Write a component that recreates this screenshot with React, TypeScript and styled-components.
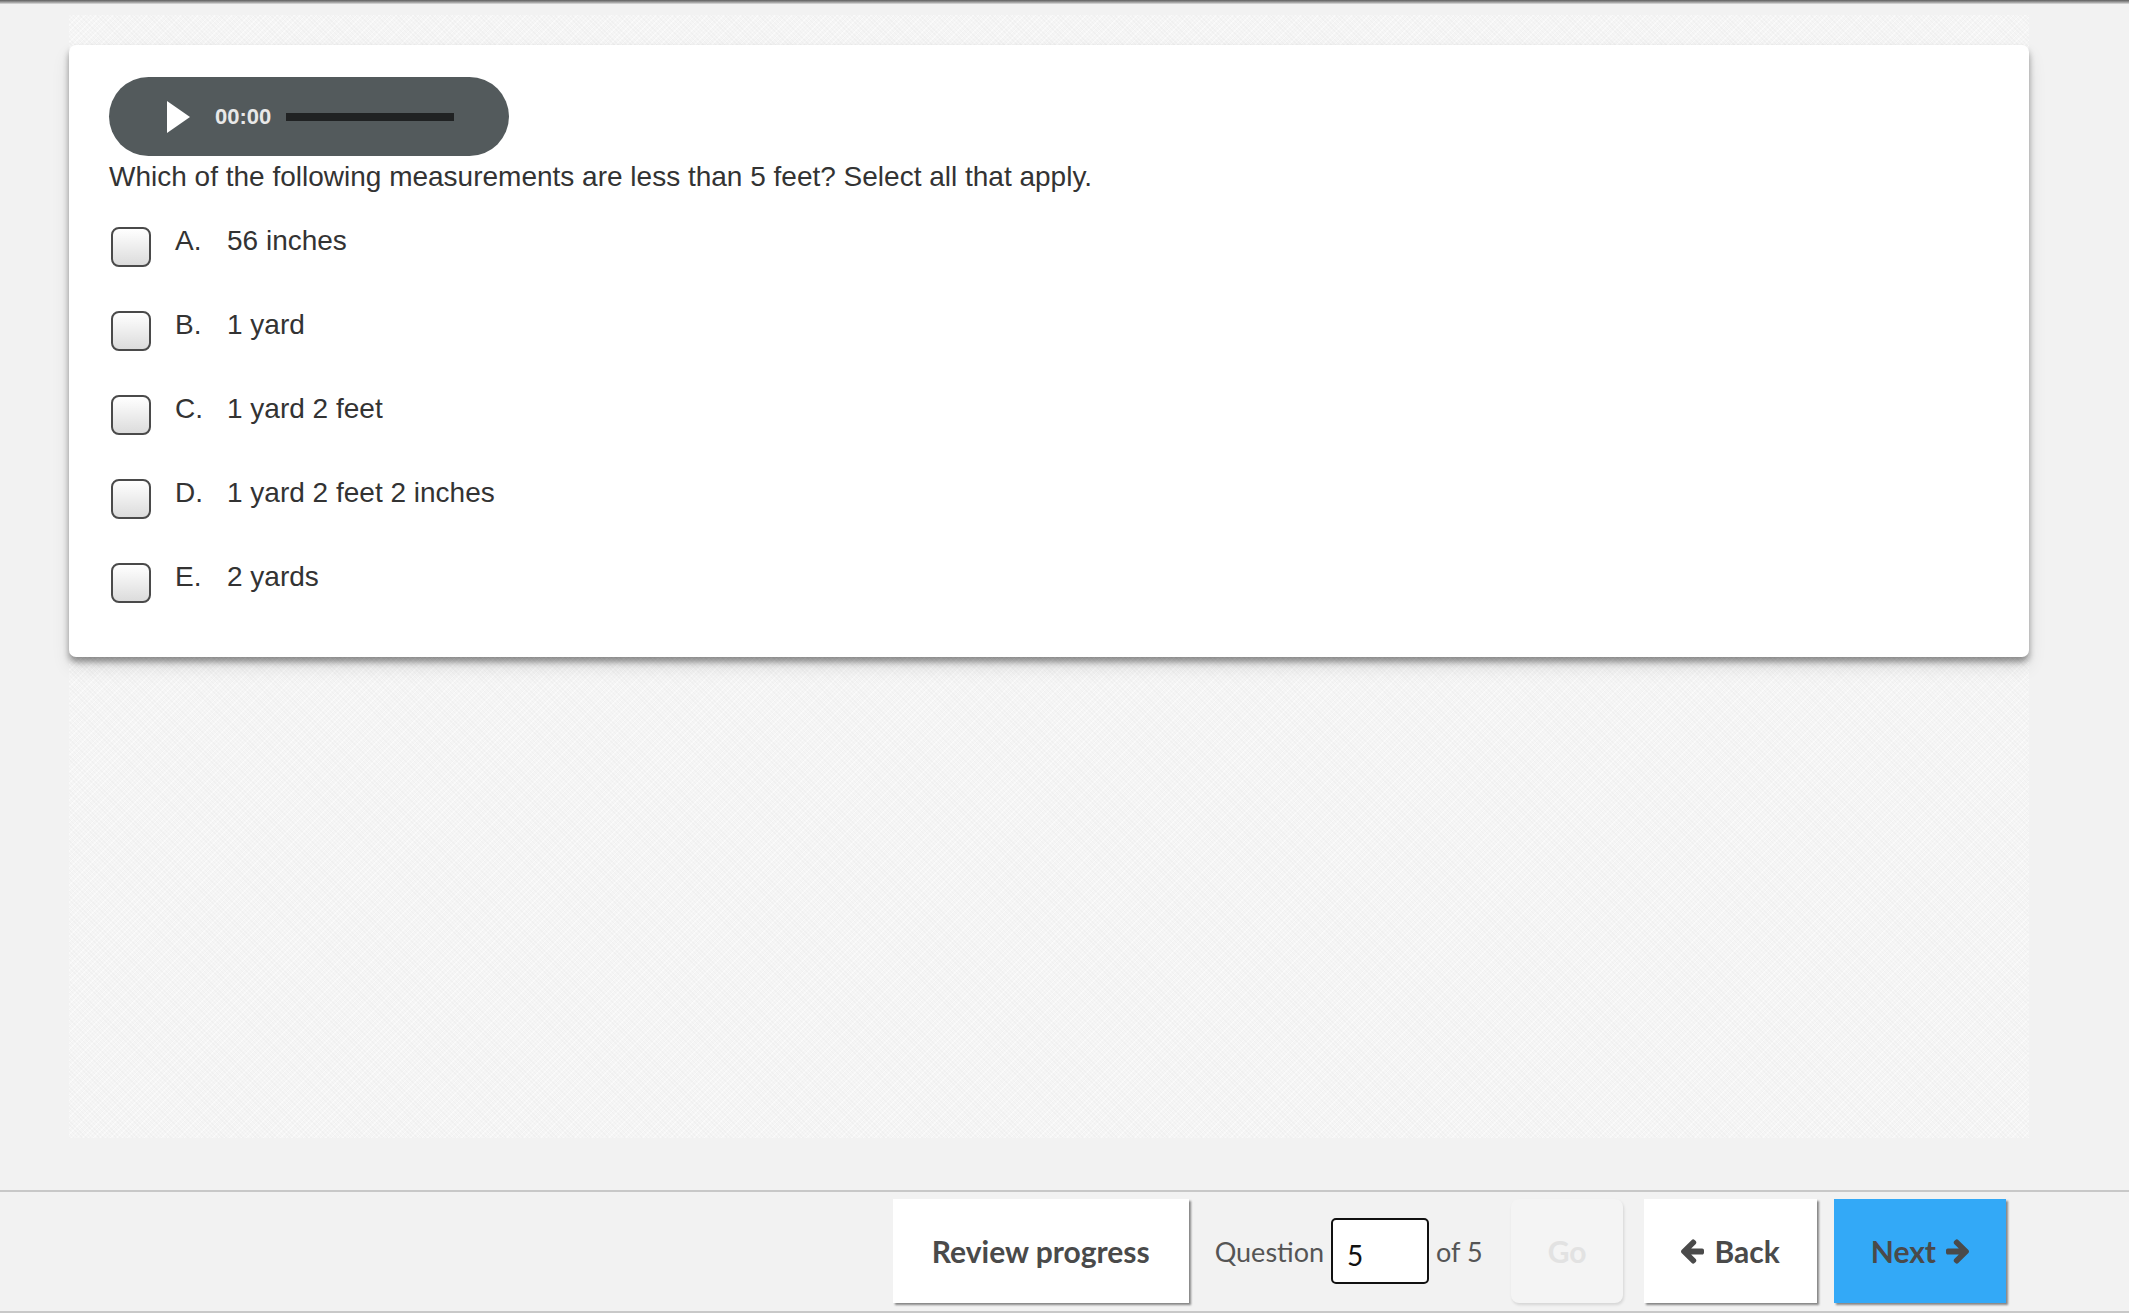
import React from 'react'
import styled, { createGlobalStyle } from 'styled-components'

const options = [
  { letter: 'A.', text: '56 inches' },
  { letter: 'B.', text: '1 yard' },
  { letter: 'C.', text: '1 yard 2 feet' },
  { letter: 'D.', text: '1 yard 2 feet 2 inches' },
  { letter: 'E.', text: '2 yards' },
]

const GlobalStyle = createGlobalStyle`
  html, body {
    margin: 0;
    padding: 0;
    background: #f2f2f2;
  }
  * {
    box-sizing: border-box;
  }
`

// chunky arrow like the old icon font one
const Arrow = ({ dir }: { dir: 'left' | 'right' }) =>
  dir === 'left' ? (
    <svg viewBox="64 181 1472 1558" width="23" height="25">
      <path
        fill="currentColor"
        d="M1536 896v128q0 53-32.5 90.5t-84.5 37.5h-704l293 294q38 36 38 90t-38 90l-75 76q-37 37-90 37-52 0-91-37l-651-652q-37-37-37-90 0-52 37-91l651-650q38-38 91-38 52 0 90 38l75 74q38 38 38 91t-38 91l-293 293h704q52 0 84.5 37.5t32.5 90.5z"
      />
    </svg>
  ) : (
    <svg viewBox="0 181 1472 1558" width="23" height="25">
      <path
        fill="currentColor"
        d="M1472 960q0 54-37 91l-651 651q-39 37-91 37-51 0-90-37l-75-75q-38-38-38-91t38-91l293-293h-704q-52 0-84.5-37.5t-32.5-90.5v-128q0-53 32.5-90.5t84.5-37.5h704l-293-294q-38-36-38-90t38-90l75-75q38-38 90-38 53 0 91 38l651 651q37 35 37 90z"
      />
    </svg>
  )

const App = () => {
  return (
    <StyledPage>
      <GlobalStyle />
      <StyledTopEdge />
      <StyledMain>
        <StyledPanel>
          <StyledCard>
            <StyledPlayer>
              <svg width="25" height="32" viewBox="0 0 25 32">
                <polygon points="1,0 24,16 1,32" fill="#ffffff" />
              </svg>
              <span className="player-time">00:00</span>
              <div className="player-track" />
            </StyledPlayer>
            <StyledQuestion>
              Which of the following measurements are less than 5 feet? Select all that apply.
            </StyledQuestion>
            <StyledOptions>
              {options.map((el) => (
                <StyledOption key={el.letter}>
                  <StyledCheckbox />
                  <span className="option-letter">{el.letter}</span>
                  <span className="option-text">{el.text}</span>
                </StyledOption>
              ))}
            </StyledOptions>
          </StyledCard>
        </StyledPanel>
      </StyledMain>
      <StyledFooter>
        <StyledButton $pad={39}>Review progress</StyledButton>
        <StyledJump>
          <span>Question</span>
          <input defaultValue="5" />
          <span>of 5</span>
        </StyledJump>
        <StyledButton $variant="disabled" $pad={37}>
          Go
        </StyledButton>
        <StyledButton $gap={21}>
          <Arrow dir="left" />
          Back
        </StyledButton>
        <StyledButton $variant="primary" $gap={17}>
          Next
          <Arrow dir="right" />
        </StyledButton>
      </StyledFooter>
    </StyledPage>
  )
}

export default App

const StyledPage = styled.div`
  display: flex;
  flex-direction: column;
  height: 100vh;
  min-height: 1313px;
  background: #f2f2f2;
`

const StyledTopEdge = styled.div`
  height: 4px;
  background: linear-gradient(#5e5e5e, #a5a5a5 60%, #e0e0e0);
`

const StyledMain = styled.div`
  flex: 1;
  padding: 11px 0 0 69px;
`

const StyledPanel = styled.div`
  width: 1960px;
  height: 1123px;
  padding-top: 30px;
  background-color: #f5f5f5;
  background-image:
    repeating-linear-gradient(45deg, rgba(0, 0, 0, 0.018) 0 1px, transparent 1px 3px),
    repeating-linear-gradient(-45deg, rgba(255, 255, 255, 0.5) 0 1px, transparent 1px 4px);
`

const StyledCard = styled.div`
  height: 612px;
  background: #ffffff;
  border-radius: 7px;
  padding: 32px 40px 0;
  box-shadow: 0 5px 6px rgba(0, 0, 0, 0.38), 0 10px 18px rgba(0, 0, 0, 0.1);
`

const StyledPlayer = styled.div`
  display: flex;
  align-items: center;
  width: 400px;
  height: 79px;
  border-radius: 40px;
  background: #535a5c;
  padding-left: 57px;

  & svg {
    margin-right: 24px;
  }

  & .player-time {
    font-family: 'Liberation Sans', Arial, sans-serif;
    font-weight: 700;
    font-size: 22px;
    color: #e8e8e8;
    margin-right: 15px;
  }

  & .player-track {
    width: 168px;
    height: 8px;
    background: #202223;
  }
`

const StyledQuestion = styled.p`
  margin: 4px 0 0;
  font-family: 'Liberation Sans', Arial, sans-serif;
  font-size: 28px;
  line-height: 34px;
  color: #333333;
`

const StyledOptions = styled.div`
  display: flex;
  flex-direction: column;
  gap: 44px;
  margin-top: 33px;
  padding-left: 2px;
`

const StyledOption = styled.div`
  display: flex;
  align-items: flex-start;
  font-family: 'Liberation Sans', Arial, sans-serif;
  font-size: 28px;
  line-height: 34px;
  color: #333333;

  & .option-letter {
    width: 52px;
    margin-left: 24px;
    margin-top: -3px;
  }

  & .option-text {
    margin-top: -3px;
  }
`

const StyledCheckbox = styled.span`
  display: block;
  width: 40px;
  height: 40px;
  border: 2px solid #4a4a4a;
  border-radius: 8px;
  background: linear-gradient(#ffffff, #dcdcdc);
`

const StyledFooter = styled.div`
  display: flex;
  align-items: center;
  justify-content: flex-end;
  height: 123px;
  padding: 7px 123px 8px 0;
  border-top: 2px solid #c8c8c8;
  border-bottom: 2px solid #c8c8c8;
  background: #f2f2f2;
  font-family: Lato, 'Open Sans', sans-serif;
`

const StyledButton = styled.div<{ $variant?: 'primary' | 'disabled'; $pad?: number; $gap?: number }>`
  display: flex;
  align-items: center;
  justify-content: center;
  gap: 10px;
  height: 104px;
  padding: 0 ${(p) => p.$pad ?? 37}px;
  margin-left: ${(p) => p.$gap ?? 18}px;
  font-size: 30px;
  font-weight: 700;
  color: ${(p) => (p.$variant === 'disabled' ? '#e2e2e2' : '#4a4a4a')};
  background: ${(p) =>
    p.$variant === 'primary' ? '#33a9f7' : p.$variant === 'disabled' ? '#f4f4f4' : '#ffffff'};
  border-radius: ${(p) => (p.$variant === 'disabled' ? '8px' : '0')};
  box-shadow: ${(p) =>
    p.$variant === 'disabled'
      ? '1px 2px 3px rgba(0, 0, 0, 0.12)'
      : '2px 2px 2px rgba(0, 0, 0, 0.45)'};
`

const StyledJump = styled.div`
  display: flex;
  align-items: center;
  margin: 0 10px 0 26px;
  font-size: 27px;
  color: #555555;

  & input {
    width: 98px;
    height: 66px;
    margin: 0 7px;
    padding: 8px 0 0 14px;
    border: 2px solid #111111;
    border-radius: 5px;
    background: #ffffff;
    font-family: Lato, 'Open Sans', sans-serif;
    font-size: 28px;
    color: #111111;
    outline: none;
  }
`
